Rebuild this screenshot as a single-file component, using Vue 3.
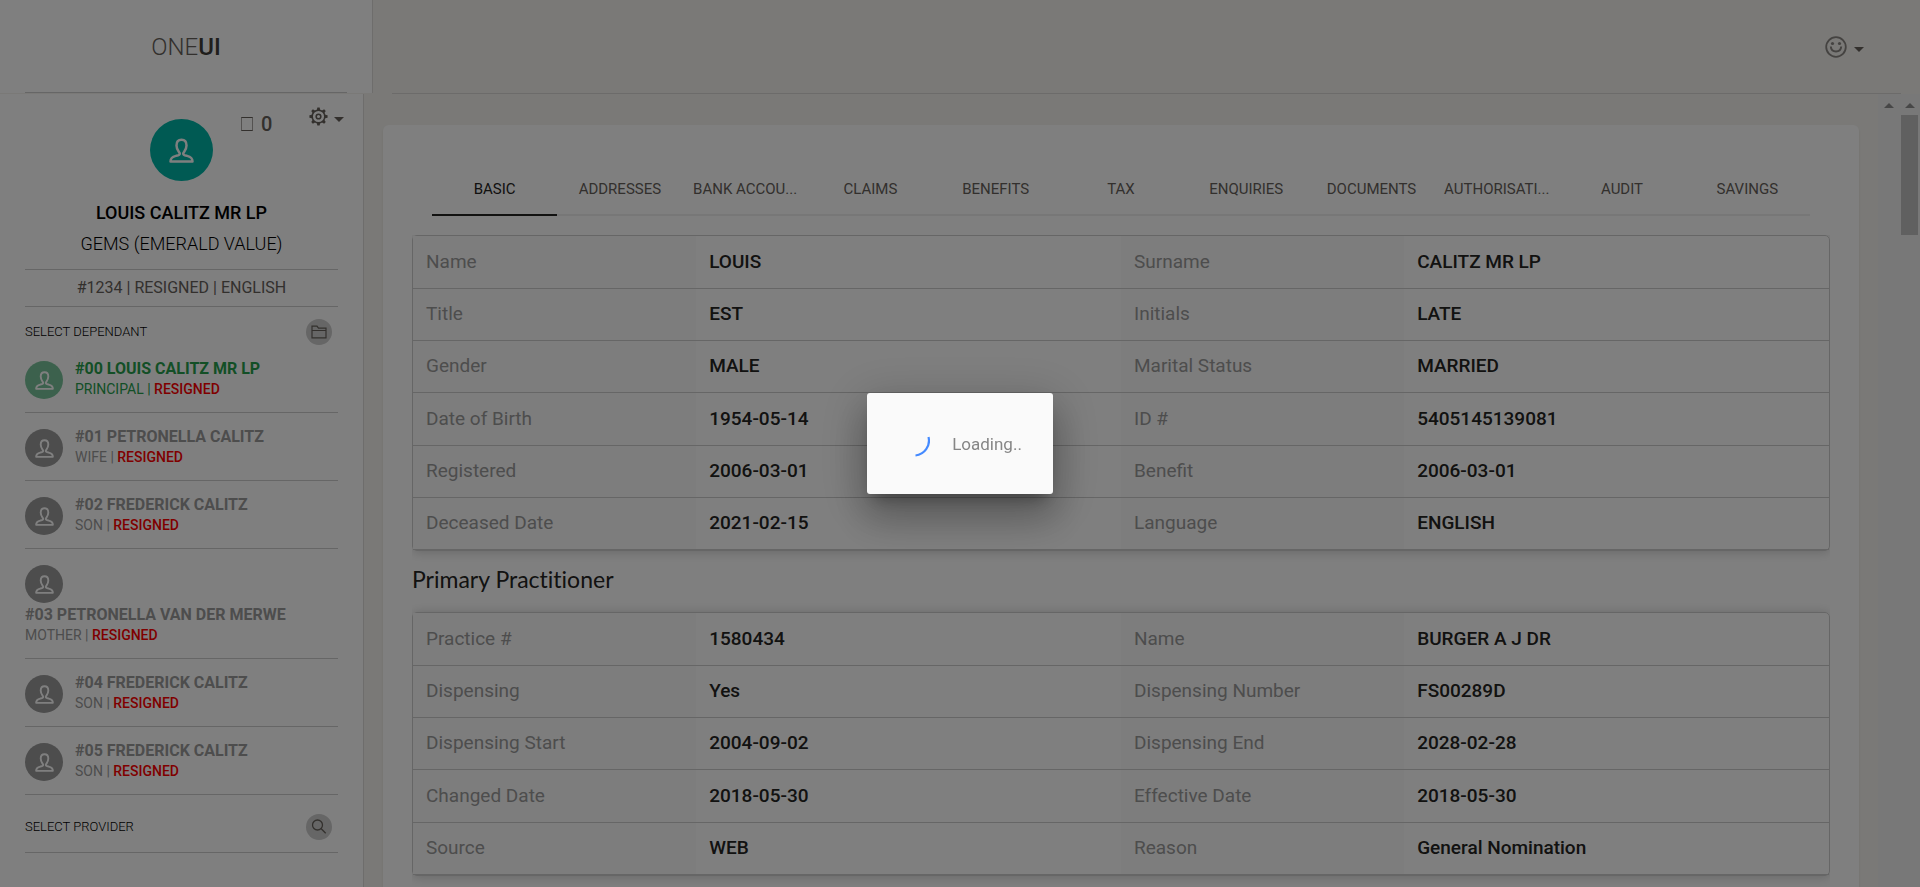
<script setup>
const dependants = [
  { name: '#00 LOUIS CALITZ MR LP', role: 'PRINCIPAL', active: true },
  { name: '#01 PETRONELLA CALITZ', role: 'WIFE' },
  { name: '#02 FREDERICK CALITZ', role: 'SON' },
  { name: '#03 PETRONELLA VAN DER MERWE', role: 'MOTHER' },
  { name: '#04 FREDERICK CALITZ', role: 'SON' },
  { name: '#05 FREDERICK CALITZ', role: 'SON' },
]

const tabs = [
  'BASIC', 'ADDRESSES', 'BANK ACCOU...', 'CLAIMS', 'BENEFITS', 'TAX',
  'ENQUIRIES', 'DOCUMENTS', 'AUTHORISATI...', 'AUDIT', 'SAVINGS',
]

const member = [
  ['Name', 'LOUIS', 'Surname', 'CALITZ MR LP'],
  ['Title', 'EST', 'Initials', 'LATE'],
  ['Gender', 'MALE', 'Marital Status', 'MARRIED'],
  ['Date of Birth', '1954-05-14', 'ID #', '5405145139081'],
  ['Registered', '2006-03-01', 'Benefit', '2006-03-01'],
  ['Deceased Date', '2021-02-15', 'Language', 'ENGLISH'],
]

const practitioner = [
  ['Practice #', '1580434', 'Name', 'BURGER A J DR'],
  ['Dispensing', 'Yes', 'Dispensing Number', 'FS00289D'],
  ['Dispensing Start', '2004-09-02', 'Dispensing End', '2028-02-28'],
  ['Changed Date', '2018-05-30', 'Effective Date', '2018-05-30'],
  ['Source', 'WEB', 'Reason', 'General Nomination'],
]

const gearTeeth = [0, 45, 90, 135, 180, 225, 270, 315]
</script>

<template>
  <div class="page">
    <svg class="defs" aria-hidden="true">
      <symbol id="icon-user" viewBox="0 0 25 25">
        <path
          d="M1.500 23.500h22c0-3.400-2.400-4.900-5.400-5.600-2.200-.5-3.900-.8-3.900-2.200 0-1.300 3.300-3.300 3.300-8.300 0-3.900-1.700-5.700-5-5.700s-5 1.800-5 5.700c0 5 3.300 7 3.300 8.300 0 1.400-1.700 1.700-3.900 2.200-3 .7-5.400 2.200-5.400 5.600z"
          fill="none" stroke="currentColor" stroke-width="2.500" stroke-linejoin="round"
        />
      </symbol>
    </svg>

    <header class="top">
      <div class="brand">
        <a href="#" class="logo">ONE<b>UI</b></a>
      </div>
      <div class="topbar">
        <button class="menu" aria-label="Account">
          <svg width="22" height="22" viewBox="0 0 22 22" fill="none" stroke="currentColor">
            <circle cx="11" cy="11" r="9.800" stroke-width="1.800" />
            <circle cx="7.500" cy="7.500" r="1.600" fill="currentColor" stroke="none" />
            <circle cx="14.500" cy="7.500" r="1.600" fill="currentColor" stroke="none" />
            <path d="M5.800 10.500c.2 3 2.200 5 5.200 5s5-2 5.200-5" stroke-width="2" />
          </svg>
          <span class="caret"></span>
        </button>
      </div>
    </header>

    <div class="body">
      <aside class="sidebar">
        <div class="profile">
          <span class="avatar large"><svg width="25" height="25"><use href="#icon-user" /></svg></span>
          <span class="counter"><i class="box"></i>0</span>
          <button class="menu settings" aria-label="Settings">
            <svg width="19" height="19" viewBox="0 0 18 18" fill="none" stroke="currentColor">
              <circle cx="9" cy="9" r="6" stroke-width="1.500" />
              <circle cx="9" cy="9" r="2.200" stroke-width="1.500" />
              <path
                v-for="a in gearTeeth" :key="a" d="M7.900 0.400h2.200l.6 2.600h-3.400z"
                :transform="`rotate(${a} 9 9)`" fill="currentColor" stroke="none"
              />
            </svg>
            <span class="caret"></span>
          </button>
        </div>
        <h1 class="member">LOUIS CALITZ MR LP</h1>
        <p class="plan">GEMS (EMERALD VALUE)</p>
        <p class="status">#1234 | RESIGNED | ENGLISH</p>

        <div class="picker">
          <span>SELECT DEPENDANT</span>
          <button class="round" aria-label="Open dependants">
            <svg width="16" height="14" viewBox="0 0 16 14" fill="none" stroke="currentColor" stroke-width="1.200">
              <path d="M1 12.800v-11.600h5l1.500 2h7.500v9.600zM1 5.500h14" />
            </svg>
          </button>
        </div>

        <ul class="dependants">
          <li v-for="d in dependants" :key="d.name">
            <a href="#" class="dependant" :class="{ active: d.active }">
              <span class="avatar"><svg width="19" height="19"><use href="#icon-user" /></svg></span>
              <span class="who">
                <b>{{ d.name }}</b>
                <small>{{ d.role }} | <em>RESIGNED</em></small>
              </span>
            </a>
          </li>
        </ul>

        <div class="picker provider">
          <span>SELECT PROVIDER</span>
          <button class="round" aria-label="Search providers">
            <svg width="16" height="16" viewBox="0 0 16 16" fill="none" stroke="currentColor" stroke-width="1.300">
              <circle cx="6.500" cy="6" r="5" /><path d="M10 9.500l4.700 4.700" />
            </svg>
          </button>
        </div>
      </aside>

      <main class="content">
        <section class="card">
          <div class="tabs" role="tablist">
            <button
              v-for="(t, i) in tabs" :key="t" role="tab" class="tab"
              :class="{ current: i === 0 }" :aria-selected="i === 0"
            >{{ t }}</button>
          </div>

          <div class="panel first">
            <table>
              <tbody>
                <tr v-for="r in member" :key="r[0]">
                  <th scope="row">{{ r[0] }}</th><td>{{ r[1] }}</td>
                  <th scope="row">{{ r[2] }}</th><td>{{ r[3] }}</td>
                </tr>
              </tbody>
            </table>
          </div>

          <h2>Primary Practitioner</h2>

          <div class="panel">
            <table>
              <tbody>
                <tr v-for="r in practitioner" :key="r[0]">
                  <th scope="row">{{ r[0] }}</th><td>{{ r[1] }}</td>
                  <th scope="row">{{ r[2] }}</th><td>{{ r[3] }}</td>
                </tr>
              </tbody>
            </table>
          </div>
        </section>
      </main>

      <div class="scroll"><i class="arrow"></i></div>
      <div class="scroll"><i class="arrow"></i><i class="thumb"></i></div>
    </div>

    <div class="scrim">
      <div class="dialog" role="dialog" aria-label="Loading">
        <svg class="spinner" width="32" height="32" viewBox="0 0 32 32" fill="none">
          <path d="M30.500 9A15 15 0 0 1 17.500 27.500" stroke="#448aff" stroke-width="2.200" />
        </svg>
        <span>Loading..</span>
      </div>
    </div>
  </div>
</template>

<style>
body {
  background: #f4f3ef;
}
</style>

<style scoped>
* {
  box-sizing: border-box;
}
.page {
  height: 100vh;
  display: flex;
  flex-direction: column;
  overflow: hidden;
  background: #f4f3ef;
  font-family: Roboto, "Liberation Sans", sans-serif;
  font-weight: 300;
  color: #66615b;
}
.defs {
  position: absolute;
  width: 0;
  height: 0;
}
h1, h2, p, ul {
  margin: 0;
  padding: 0;
  font-weight: 400;
}
button {
  padding: 0;
  border: 0;
  background: none;
  font: inherit;
  color: inherit;
}
a {
  color: inherit;
  text-decoration: none;
}
svg {
  display: block;
}
.top {
  display: flex;
  flex: none;
  height: 94px;
}
.brand {
  width: 373px;
  height: 93px;
  padding: 0 25px;
  background: #fff;
  border-right: 1px solid #dcdbd8;
}
.logo {
  display: flex;
  justify-content: center;
  height: 93px;
  line-height: 95px;
  border-bottom: 1px solid #ccc;
  font-size: 24px;
}
.logo b {
  font-weight: 500;
  color: #403d39;
}
.topbar {
  flex: 1;
  display: flex;
  align-items: center;
  justify-content: flex-end;
  margin: 0 19px;
  padding-right: 37px;
  border-bottom: 1px solid #d8d7d4;
}
.menu {
  display: flex;
  align-items: center;
  gap: 7px;
}
.topbar .menu {
  color: #8a8683;
}
.caret {
  margin-top: 5px;
  border: 5px solid transparent;
  border-top-color: #66615b;
  border-bottom: 0;
}
.body {
  flex: 1;
  min-height: 0;
  display: flex;
}
.sidebar {
  flex: none;
  width: 364px;
  padding: 0 25px;
  background: #fff;
  border-right: 1px solid #dcdbd8;
}
.profile {
  position: relative;
  padding-top: 25px;
  height: 104px;
}
.avatar {
  display: flex;
  align-items: center;
  justify-content: center;
  flex: none;
  width: 38px;
  height: 38px;
  border-radius: 50%;
  background: #9a9a9a;
  color: #fff;
}
.avatar.large {
  width: 63px;
  height: 62px;
  margin: 0 auto;
  background: #00b4a6;
}
.counter {
  position: absolute;
  top: 18px;
  left: 216px;
  display: flex;
  align-items: center;
  gap: 8px;
  font-size: 20px;
  line-height: 24px;
  font-weight: 500;
}
.box {
  width: 12px;
  height: 14px;
  border: 1px solid #66615b;
  border-left-color: #a8a5a2;
  border-right-color: #a8a5a2;
}
.settings {
  position: absolute;
  top: 13px;
  right: -6px;
  gap: 6px;
}
.member {
  text-align: center;
  font-size: 18px;
  line-height: 30px;
  font-weight: 500;
  color: #000;
}
.plan {
  height: 42px;
  text-align: center;
  font-size: 18px;
  line-height: 32px;
  font-weight: 300;
  color: #000;
  border-bottom: 1px solid #ccc;
}
.status {
  text-align: center;
  font-size: 16px;
  line-height: 36px;
  border-bottom: 1px solid #ccc;
}
.picker {
  display: flex;
  align-items: center;
  justify-content: space-between;
  padding: 12px 6px 0 0;
  font-size: 13px;
  color: #000;
}
.picker span {
  padding-bottom: 2px;
}
.picker.provider {
  padding: 19px 6px 12px 0;
  border-bottom: 1px solid #ccc;
}
.round {
  display: flex;
  align-items: center;
  justify-content: center;
  width: 26px;
  height: 26px;
  border-radius: 50%;
  background: #ccc;
  color: #66615b;
}
.dependants {
  list-style: none;
}
.dependant {
  display: flex;
  flex-wrap: wrap;
  gap: 1px 12px;
  padding: 13px 0;
  border-bottom: 1px solid #ccc;
  color: #9a9a9a;
}
.dependant .avatar {
  margin-top: 3px;
}
.who {
  padding-right: 12px;
}
.who b {
  display: block;
  font-size: 16px;
  line-height: 22px;
  font-weight: 700;
}
.who small {
  display: block;
  font-size: 14px;
  line-height: 19px;
}
.who em {
  font-style: normal;
  font-weight: 500;
  color: #f00;
}
.dependant.active {
  color: #269e4c;
}
.active .avatar {
  background: #79c39a;
}
.content {
  flex: 1;
  min-width: 0;
  padding: 31px 19px 0;
}
.card {
  height: 100%;
  padding: 37px 29px 0;
  border-radius: 6px 6px 0 0;
  background: #fff;
  box-shadow: 0 2px 2px rgba(204, 197, 185, 0.5);
}
.tabs {
  display: flex;
  margin: 0 20px 19px;
  box-shadow: inset 0 -2px #eee;
}
.tab {
  flex: 1 1 0;
  min-width: 0;
  height: 54px;
  font-size: 15px;
  font-weight: 400;
  white-space: nowrap;
}
.tab.current {
  color: #252422;
  box-shadow: inset 0 -2px #252422;
}
.panel {
  border: 1px solid #ccc;
  border-radius: 5px;
  box-shadow: 0 1px 12px rgba(0, 0, 0, 0.2);
  clip-path: inset(-20px 0);
}
.panel.first {
  clip-path: inset(0 0 -20px);
}
table {
  width: 100%;
  table-layout: fixed;
  border-spacing: 0;
  font-size: 19px;
}
th,
td {
  height: 52px;
  padding: 0 13px 2px;
  border-bottom: 1px solid #ccc;
  text-align: left;
}
tr:nth-child(3n + 1) > * {
  height: 53px;
}
th {
  width: 20%;
  background: #fbfbfb;
  font-weight: 400;
  color: #9a9a9a;
}
td {
  width: 30%;
  font-weight: 500;
  color: #252422;
}
h2 {
  height: 61px;
  font-family: Lato, sans-serif;
  font-size: 23px;
  font-variant-ligatures: none;
  line-height: 56px;
  color: #252422;
}
.scroll {
  flex: none;
  display: flex;
  flex-direction: column;
  align-items: center;
  width: 21px;
  background: #f1f1f1;
}
.arrow {
  margin-top: 9px;
  border: 5px solid transparent;
  border-top: 0;
  border-bottom-color: #8f8f8f;
}
.thumb {
  width: 17px;
  height: 120px;
  margin-top: 7px;
  background: #c1c1c1;
}
.scrim {
  position: fixed;
  inset: 0;
  display: flex;
  align-items: center;
  justify-content: center;
  background: rgba(0, 0, 0, 0.5);
}
.dialog {
  display: flex;
  align-items: center;
  gap: 22px;
  height: 101px;
  padding: 0 31px;
  border-radius: 3px;
  background: #fafafa;
  color: #868686;
  font-size: 17px;
  font-weight: 400;
  box-shadow: 0 11px 15px -7px rgba(0, 0, 0, 0.3), 0 24px 38px 3px rgba(0, 0, 0, 0.2), 0 9px 46px 8px rgba(0, 0, 0, 0.16);
}
</style>
